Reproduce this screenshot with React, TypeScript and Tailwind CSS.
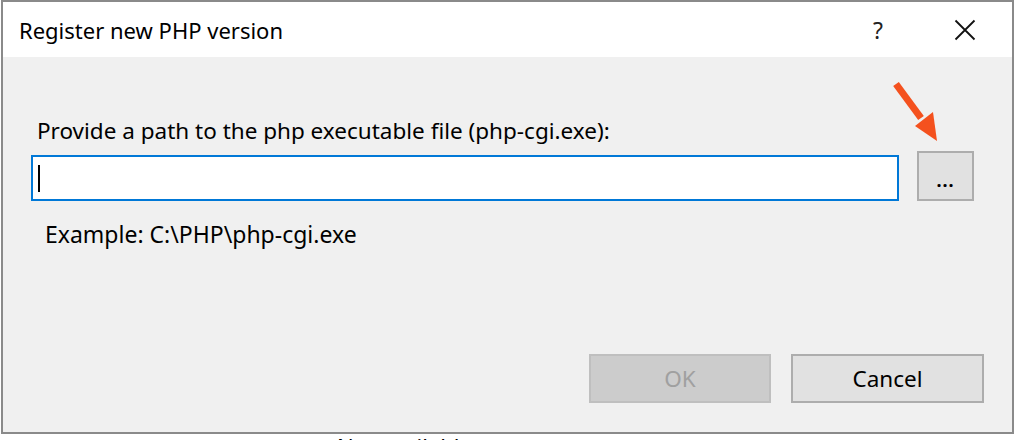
import React from "react";

export default function App() {
  return (
    <div
      className="relative w-[1016px] h-[440px] overflow-hidden bg-white text-[#000]"
      style={{ fontFamily: '"Noto Sans", "Open Sans", sans-serif' }}
    >
      <div className="ml-[1px] w-[1013px] h-[434px] border-2 border-[#8a8a8a] bg-[#f0f0f0] flex flex-col">
        {/* Title bar */}
        <div className="h-[55px] bg-white flex items-center shrink-0">
          <span className="ml-[16px] text-[22px] leading-[28px] text-[#000]">Register new PHP version</span>
          <span className="ml-auto text-[23px] leading-[28px] text-[#222] mr-[71px]">?</span>
          <svg width="22" height="22" viewBox="0 0 22 22" className="mr-[36px]">
            <path d="M1.5 1.5 L20.5 20.5 M20.5 1.5 L1.5 20.5" stroke="#111" strokeWidth="1.8" fill="none" />
          </svg>
        </div>
        {/* Body */}
        <div className="flex-1 flex flex-col">
          <div className="mt-[60px] ml-[34px] text-[22.5px] leading-[28px]">
            Provide a path to the php executable file (php-cgi.exe):
          </div>
          <div className="mt-[6px] ml-[28px] flex items-end gap-[18px]">
            <div className="w-[868px] h-[46px] bg-white border-2 border-[#0078d7] flex items-center">
              <div className="ml-[5px] w-[2px] h-[27px] bg-black" />
            </div>
            <div className="w-[57px] h-[50px] bg-[#e1e1e1] border-2 border-[#adadad] flex items-center justify-center">
              <span className="text-[18px] leading-none font-bold tracking-[1px] mt-[8px]">...</span>
            </div>
          </div>
          <div className="mt-[19px] ml-[42px] text-[23px] leading-[28px]">
            Example: C:\PHP\php-cgi.exe
          </div>
          <div className="mt-auto mb-[29px] flex justify-end gap-[20px] mr-[28px]">
            <div className="w-[182px] h-[49px] bg-[#cccccc] border-2 border-[#bfbfbf] flex items-center justify-center text-[22.5px] text-[#a0a0a0]">
              OK
            </div>
            <div className="w-[193px] h-[49px] bg-[#e1e1e1] border-2 border-[#adadad] flex items-center justify-center text-[22.5px]">
              Cancel
            </div>
          </div>
        </div>
      </div>
      <div className="pl-[337px] text-[22px] leading-[22px] mt-[1px]">Not available</div>

      {/* Annotation arrow */}
      <svg className="absolute left-[885px] top-[76px]" width="60" height="70" viewBox="0 0 60 70">
        <path d="M11 8 L36 42" stroke="#f4511e" strokeWidth="7" strokeLinecap="butt" fill="none" />
        <path d="M30 50 L48 36 L52 65 Z" fill="#f4511e" />
      </svg>
    </div>
  );
}
